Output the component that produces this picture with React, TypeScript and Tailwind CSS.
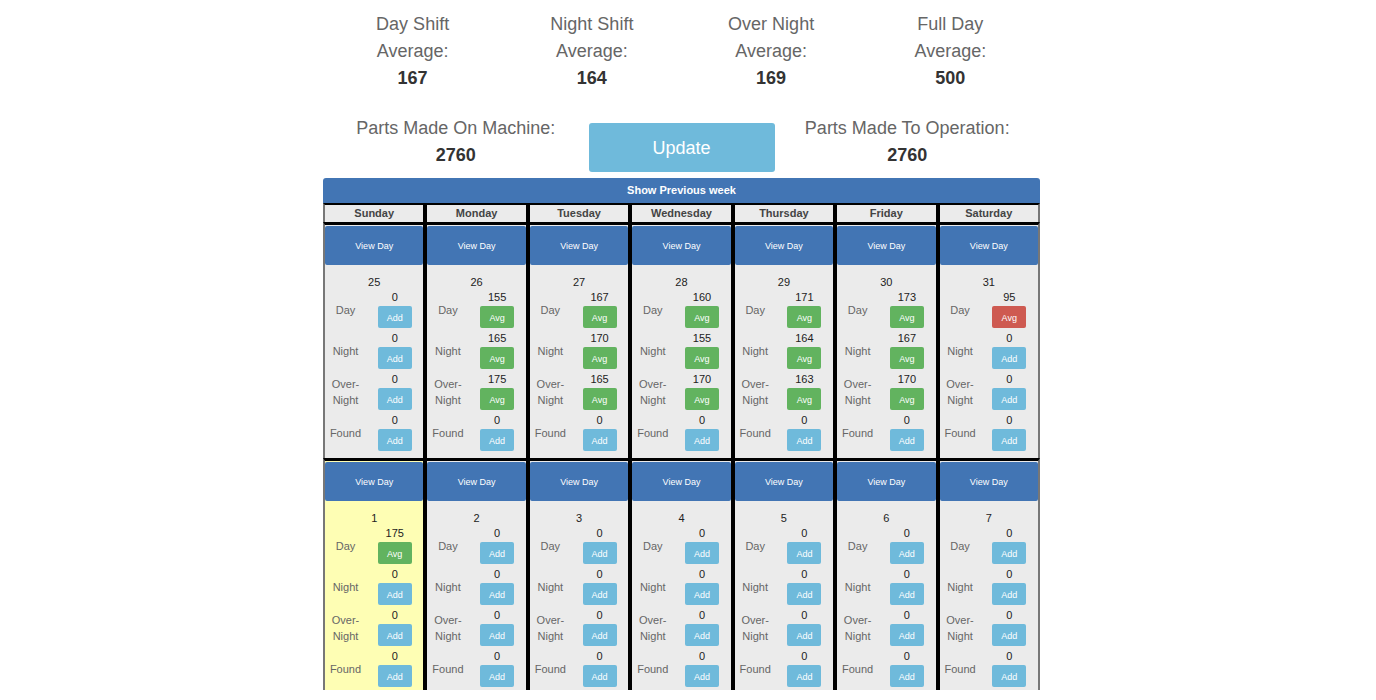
type Entry = { label: string; value: number };
type Day = { date: number; entries: Entry[]; today?: boolean };

const labels = ['Day', 'Night', 'Over-Night', 'Found'];
const weekdays = ['Sunday', 'Monday', 'Tuesday', 'Wednesday', 'Thursday', 'Friday', 'Saturday'];
const TARGET = 100;

const day = (date: number, values: number[], today = false): Day => ({
  date,
  today,
  entries: labels.map((label, i) => ({ label, value: values[i] })),
});

const weeks: Day[][] = [
  [
    day(25, [0, 0, 0, 0]),
    day(26, [155, 165, 175, 0]),
    day(27, [167, 170, 165, 0]),
    day(28, [160, 155, 170, 0]),
    day(29, [171, 164, 163, 0]),
    day(30, [173, 167, 170, 0]),
    day(31, [95, 0, 0, 0]),
  ],
  [
    day(1, [175, 0, 0, 0], true),
    day(2, [0, 0, 0, 0]),
    day(3, [0, 0, 0, 0]),
    day(4, [0, 0, 0, 0]),
    day(5, [0, 0, 0, 0]),
    day(6, [0, 0, 0, 0]),
    day(7, [0, 0, 0, 0]),
  ],
];

const averages = [
  { name: 'Day Shift', value: 167 },
  { name: 'Night Shift', value: 164 },
  { name: 'Over Night', value: 169 },
  { name: 'Full Day', value: 500 },
];

function buttonColor(value: number) {
  if (value === 0) return 'bg-[#6fbadb]';
  return value < TARGET ? 'bg-[#ce5a51]' : 'bg-[#62b35f]';
}

function EntryRow({ label, value }: Entry) {
  return (
    <div className="grid grid-cols-[5fr_7fr] items-center pb-[3px]">
      <div className="pt-px text-center text-[11px] leading-4 text-[#666]">
        {label === 'Over-Night' ? (
          <>
            Over-
            <br />
            Night
          </>
        ) : (
          label
        )}
      </div>
      <div className="flex flex-col items-center gap-0.5">
        <span className="text-[11px] leading-[14px] text-[#222]">{value}</span>
        <button
          type="button"
          className={`h-[22px] w-[34px] rounded-[2px] pt-[3px] text-[9px] text-white ${buttonColor(value)}`}
        >
          {value === 0 ? 'Add' : 'Avg'}
        </button>
      </div>
    </div>
  );
}

function DayCell({ date, entries, today }: Day) {
  return (
    <td
      className={`border-x-2 border-t-[3px] border-black p-0 pt-px align-top first:border-l-[#777] last:border-r-[#777] ${today ? 'bg-[#fefeb4]' : 'bg-[#ebebeb]'}`}
    >
      <button
        type="button"
        className="block h-[39px] w-full rounded-[2px] bg-[#4275b4] pt-0.5 text-[9px] text-white"
      >
        View Day
      </button>
      <div className="pt-[9px] text-center text-[11px] leading-4 text-[#222]">{date}</div>
      {entries.map((e) => (
        <EntryRow key={e.label} {...e} />
      ))}
    </td>
  );
}

function Stat({ lines, value }: { lines: string[]; value: number }) {
  return (
    <div className="text-center text-lg leading-[27px] text-[#666]">
      {lines.map((l) => (
        <div key={l}>{l}</div>
      ))}
      <div className="font-bold text-[#333]">{value}</div>
    </div>
  );
}

export default function App() {
  return (
    <div className="bg-white pr-[13px] font-['Liberation_Sans',Arial,sans-serif]">
      <main className="mx-auto w-full max-w-[717px] pt-[11px]">
        <section className="grid grid-cols-4">
          {averages.map((a) => (
            <Stat key={a.name} lines={[a.name, 'Average:']} value={a.value} />
          ))}
        </section>
        <section className="flex pt-[23px]">
          <div className="flex-1">
            <Stat lines={['Parts Made On Machine:']} value={2760} />
          </div>
          <button
            type="button"
            className="mt-2 h-[49px] w-[186px] rounded-[3px] bg-[#6fbadb] text-lg text-white"
          >
            Update
          </button>
          <div className="flex-1">
            <Stat lines={['Parts Made To Operation:']} value={2760} />
          </div>
        </section>
        <button
          type="button"
          className="mt-1.5 block h-[25px] w-full rounded-t-[3px] bg-[#4275b4] text-[11px] font-bold text-white"
        >
          Show Previous week
        </button>
        <table className="w-full table-fixed border-separate border-spacing-0">
          <thead>
            <tr>
              {weekdays.map((d) => (
                <th
                  key={d}
                  scope="col"
                  className="border-x-2 border-t-2 border-black bg-[#ebebeb] p-0 text-[11px] leading-[17px] font-bold text-[#444] first:border-l-[#777] last:border-r-[#777]"
                >
                  {d}
                </th>
              ))}
            </tr>
          </thead>
          <tbody>
            {weeks.map((week) => (
              <tr key={week[0].date} className="not-last:h-[236px]">
                {week.map((d) => (
                  <DayCell key={d.date} {...d} />
                ))}
              </tr>
            ))}
          </tbody>
        </table>
      </main>
    </div>
  );
}
